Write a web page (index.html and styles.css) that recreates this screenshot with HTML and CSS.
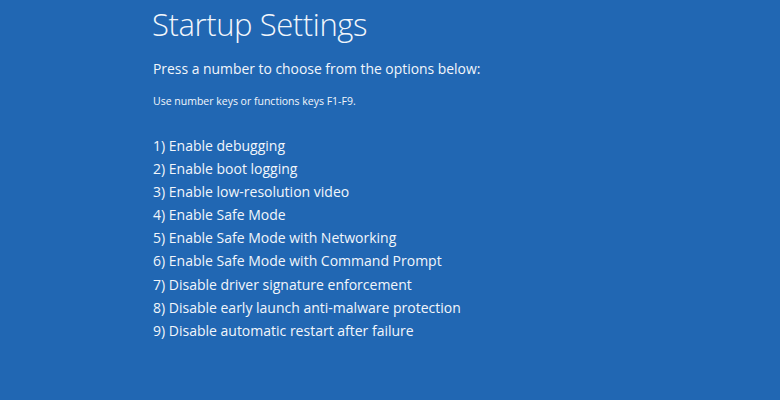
FILE: index.html
```html
<!DOCTYPE html>
<html>
<head>
<meta charset="utf-8">
<link rel="stylesheet" href="styles.css">
</head>
<body>
<div class="screen">
  <h1 class="title">Startup Settings</h1>
  <p class="prompt">Press a number to choose from the options below:</p>
  <p class="hint">Use number keys or functions keys F1-F9.</p>
  <ol class="options">
    <li>1) Enable debugging</li>
    <li>2) Enable boot logging</li>
    <li>3) Enable low-resolution video</li>
    <li>4) Enable Safe Mode</li>
    <li>5) Enable Safe Mode with Networking</li>
    <li>6) Enable Safe Mode with Command Prompt</li>
    <li>7) Disable driver signature enforcement</li>
    <li>8) Disable early launch anti-malware protection</li>
    <li>9) Disable automatic restart after failure</li>
  </ol>
</div>
</body>
</html>
```
FILE: styles.css
```css
html, body {
  margin: 0;
  padding: 0;
  background: #2167b3;
}
.screen {
  width: 780px;
  height: 400px;
  box-sizing: border-box;
  padding: 4px 0 0 152px;
  color: #f2f6fb;
  font-family: "Open Sans", "Noto Sans", sans-serif;
  background: #2167b3;
  overflow: hidden;
}
.title {
  margin: 0;
  font-size: 31px;
  font-weight: 300;
  line-height: 40px;
  letter-spacing: -0.4px;
}
.prompt {
  margin: 14px 0 0 1px;
  font-size: 13.9px;
  line-height: 22px;
}
.hint {
  margin: 13px 0 0 1px;
  font-size: 10.5px;
  line-height: 16px;
}
.options {
  list-style: none;
  margin: 25px 0 0 1px;
  padding: 0;
  font-size: 14px;
  line-height: 23.1px;
}
```
